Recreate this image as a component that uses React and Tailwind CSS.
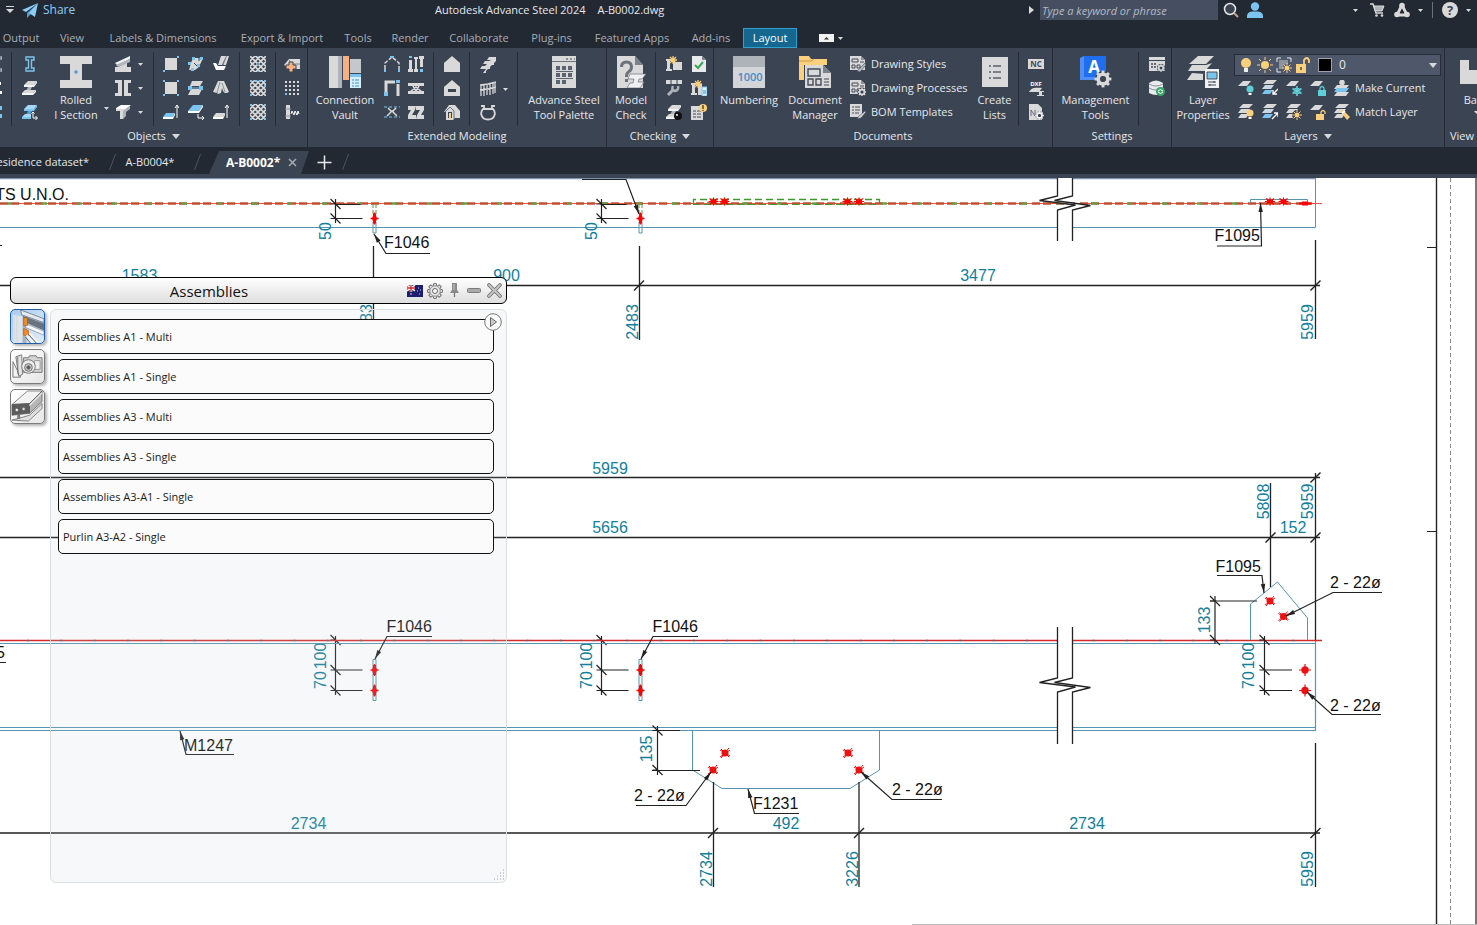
import React from "react";

const G = "#d9d9d9";
const B = "#7cc4f0";
const D = "#3b4453";
const Y = "#fbd07c";
const C = "#5fd0d8";

/* ---------- helpers ---------- */

function Ico({ s = 16, children, className = "" }) {
  return (
    <svg width={s} height={s} viewBox={`0 0 ${s} ${s}`} className={`shrink-0 ${className}`} aria-hidden="true">
      {children}
    </svg>
  );
}

function Caret({ big = false, className = "" }) {
  return big ? (
    <svg width="8" height="5" viewBox="0 0 8 5" className={`shrink-0 ${className}`} aria-hidden="true">
      <path d="M0 0h8L4 5z" fill={G} />
    </svg>
  ) : (
    <svg width="5" height="3" viewBox="0 0 5 3" className={`shrink-0 ${className}`} aria-hidden="true">
      <path d="M0 0h5L2.500 3z" fill={G} />
    </svg>
  );
}

function IconButton({ label, children }) {
  return (
    <button type="button" aria-label={label} className="flex h-6 w-6 shrink-0 items-center justify-center">
      {children}
    </button>
  );
}

function Column({ items, className = "" }) {
  return (
    <div className={`flex shrink-0 flex-col items-center ${className}`}>
      {items.map(([label, icon]) => (
        <IconButton key={label} label={label}>
          <Ico>{icon}</Ico>
        </IconButton>
      ))}
    </div>
  );
}

function BigButton({ lines, icon, className = "" }) {
  return (
    <button type="button" className={`flex shrink-0 flex-col items-center pt-1 ${className}`}>
      {icon}
      <span className="mt-1 text-[11px] leading-[15px] whitespace-nowrap text-[#e6e8eb]">
        {lines.map((l) => (
          <span key={l} className="block">{l}</span>
        ))}
      </span>
    </button>
  );
}

function Sep() {
  return <div className="w-px shrink-0 self-stretch bg-[#252c37]" />;
}

function Panel({ title, caret, className = "", children }) {
  return (
    <section className={`flex shrink-0 flex-col border-r border-[#252c37] ${className}`}>
      <div className="mt-1 flex h-[74px]">{children}</div>
      <h2 className="flex h-[21px] items-center justify-center gap-[6px] text-[11px] text-[#e6e8eb]">
        {title}
        {caret && <Caret big />}
      </h2>
    </section>
  );
}

/* ---------- small icon drawings (16 x 16) ---------- */

const beam3d = (
  <>
    <path d="M6 1h9l-3 4H2z" fill={G} />
    <path d="M2 5h10l3-4v2l-3 4H2z" fill="#f4f5f6" />
    <path d="M6 7h4l-2 4H4z" fill="#aeb3ba" />
    <path d="M3 10h11l-3 3H0z" fill={G} />
    <path d="M0 13h11l3-3v2l-3 3H0z" fill="#f4f5f6" />
  </>
);
const hatch = (dot) => (
  <>
    <path
      d="M0 5l5-5M0 10.500L10.500 0M0 16L16 0M5.500 16L16 5.500M11 16l5-5M11 0l5 5M5.500 0L16 10.500M0 0l16 16M0 5.500L10.500 16M0 11l5 5"
      stroke={G}
      strokeWidth="1.700"
    />
    {dot === 0 && <path d="M7 7h2v2H7zM7 0h2v1H7zM7 15h2v1H7z" fill="#4f9fd4" />}
    {dot === 1 && <path d="M0 14h2v2H0zM14 0h2v2h-2zM5 0h2v2H5zM9 0h2v2H9zM0 0h2v2H0zM14 5h2v2h-2z" fill={B} />}
    {dot === 2 && <path d="M0 0h2v2H0zM14 0h2v2h-2zM0 14h2v2H0zM14 14h2v2h-2z" fill={B} />}
  </>
);
const house = <path d="M8 0l8 7v9H0V7z" fill={G} />;
const slab = (c) => (
  <>
    <path d="M3 9h9l-2 4H0z" fill={c} />
    <path d="M0 13h10v2H0zM10 13l2-4v2l-2 4z" fill="#fff" />
    <path d="M14 14V2M12 4l2-3 2 3" stroke="#fff" fill="none" />
  </>
);
const sheet = (
  <>
    <path d="M0 0h11l4 4v10H0z" fill={G} />
    <path d="M11 0l4 4h-4z" fill="#8a919c" />
    <path d="M2 3h6v3H2zM2 9h3v3H2zM7 9h3v3H7zM10 6h4" stroke="#444c59" fill="none" />
  </>
);
const gear = (cx, cy, r, f = G, hole = D) => (
  <g>
    <circle cx={cx} cy={cy} r={r} fill="none" stroke={f} strokeWidth={r * 0.75} />
    {[0, 45, 90, 135, 180, 225, 270, 315].map((a) => (
      <rect key={a} x={cx - r * 0.3} y={cy - r * 1.75} width={r * 0.6} height={r * 0.7} fill={f} transform={`rotate(${a} ${cx} ${cy})`} />
    ))}
    <circle cx={cx} cy={cy} r={r * 0.55} fill={hole} />
  </g>
);
const star = (x, y) => (
  <path d={`M${x} ${y - 4}v8M${x - 4} ${y}h8M${x - 3} ${y - 3}l6 6M${x + 3} ${y - 3}l-6 6`} stroke={Y} strokeWidth="1.300" />
);
const bulb = (x, y, c) => (
  <>
    <circle cx={x} cy={y} r="3.500" fill={c} />
    <path d={`M${x - 1.5} ${y + 4}h3v2h-3z`} fill="#fff" />
  </>
);
const oneLayer = <path d="M5 1h8L9 6H0z" fill={G} />;
const layers = (blue) => (
  <>
    <path d="M5 0h10l-4 4H1z" fill={G} />
    <path d="M3 5h9l-3 4H0z" fill={blue ? "#c9d7e2" : G} />
    <path d="M3 10h8l-3 4H0z" fill={blue ? B : G} />
  </>
);
const sun = (x, y) => (
  <>
    <circle cx={x} cy={y} r="2.500" fill={Y} />
    <path d={`M${x} ${y - 5}v2M${x} ${y + 3}v2M${x - 5} ${y}h2M${x + 3} ${y}h2M${x - 3.5} ${y - 3.5}l1.500 1.500M${x + 2} ${y + 2}l1.500 1.500M${x + 3.5} ${y - 3.5}l-1.500 1.500M${x - 2} ${y + 2}l-1.500 1.500`} stroke={Y} />
  </>
);

const cutColumn = [
  ["Beam outline", <path key="a" d="M2 1h14v2h-6v10h6v2H2" stroke={G} fill="none" />],
  ["Compound beam", <path key="a" d="M2 2h13v3H2zM2 11h14v3H2z" fill="#fff" />],
  ["Folded beam", <path key="a" d="M2 2h14v4H2zM2 10h14v4H2z" fill={B} />],
];
const beamColumn = [
  ["I section", <path key="a" d="M4 1h8v3h-2.500v8H12v3H4v-3h2.500V4H4z" fill="none" stroke={B} strokeWidth="1.400" />],
  ["Curved beam", beam3d],
  ["Beam on axis", <g key="a"><path d="M6 1h9l-3 4H2z" fill="#a8d6f5" /><path d="M2 5h10l3-4v2l-3 4H2z" fill={B} /><path d="M6 7h4l-2 4H4z" fill="#4f9fd4" /><path d="M3 10h6v3H0z" fill="#a8d6f5" /><path d="M0 13h9v2H0z" fill={B} /><path d="M11 8v6h4M13.500 12l2 2-2 2M9.500 9.500L11 8l1.500 1.500" stroke="#fff" fill="none" /></g>],
];
const splitColumn = [
  ["Tapered beam", <g key="a"><path d="M0 7l15-7v3L2 9z" fill="#f0f1f2" /><path d="M1 9l14-6v3L3 11z" fill="#b4b8be" /><path d="M0 11h16v5H0z" fill={G} /><path d="M3 11l9-4v4z" fill={G} /></g>],
  ["Compound section", <path key="a" d="M0 0h7v16H0v-3h3V3H0zM9 0h7v3h-3v10h3v3H9z" fill={G} />],
  ["Tee section", <g key="a"><path d="M1 4l5-3h10l-5 4H1z" fill="#fff" /><path d="M1 5h10v2H1zM5 7h3v8H5z" fill={G} /><path d="M8 7l7-5v3l-4 3v4l-3 3z" fill="#aeb3ba" /></g>],
];
const plateA = [
  ["Rectangular plate", <g key="a"><path d="M2 2h12v12H2z" fill={G} /><path d="M14 0h2v2h-2zM0 14h2v2H0z" fill={B} /></g>],
  ["Plate at center", <g key="a"><path d="M2 2h12v12H2z" fill={G} /><path d="M0 0h2v2H0zM14 0h2v2h-2zM0 14h2v2H0zM14 14h2v2h-2z" fill={B} /></g>],
  ["Slab", slab(B)],
];
const plateB = [
  ["Polygonal plate", <g key="a"><path d="M5 2h10l-4 9-4 3H1l2-7z" fill={G} /><path d="M6 7l3 3M11 2v3" stroke={D} /><path d="M4 1h3v3H4zM12 1h3v3h-3zM0 6h3v3H0zM9 8h3v3H9zM3 12h3v3H3z" fill={B} /></g>],
  ["Folded plate", <g key="a"><path d="M4 1h11l-3 5H2zM3 9h11l-3 6H0z" fill={G} /><path d="M0 6h4v4H0zM11 6h4v4h-4z" fill={B} /><path d="M4 8h8" stroke={B} /></g>],
  ["Isolated footing", <g key="a"><path d="M5 1h10l-4 6H0z" fill={B} /><path d="M0 7h11v2H0zM11 7l4-6v2l-4 6z" fill="#fff" /><path d="M10 10v4h6M14 12l2 2-2 2" stroke="#fff" fill="none" /></g>],
];
const plateC = [
  ["Bent plate", <g key="a"><path d="M8 0h5L9 9H5zM13 0h3l-3 9h-3z" fill={G} /><path d="M10 9l3.500-9" stroke="#7b828d" /><path d="M0 7h3l2 3h8l-2 4H3z" fill="#fff" /></g>],
  ["Conical plate", <g key="a"><path d="M5 1h6l5 11c-3 2-5 1-6-1l-1-3-1 5-3 1-1-1-4-1z" fill={G} /><path d="M7 2L4 13M9 3l3 9" stroke="#8a919c" /></g>],
  ["Concrete slab", slab(G)],
];
const gratings = [["Standard grating", hatch(0)], ["Variable grating", hatch(1)], ["Polygon grating", hatch(2)]];
const bolts = [
  ["Add material", <g key="a"><path d="M0 9l5-6h11v10H6z" fill={G} /><path d="M16 8H8l-3-4" stroke="#7b828d" fill="none" /><path d="M5 6h4v3h3v4H9v3H5v-3H2V9h3z" fill="#f5b183" stroke={D} /></g>],
  ["Bolts", <g key="a">{[1, 5, 9, 13].map((y) => [1, 5, 9, 13].map((x) => <rect key={`${x}-${y}`} x={x} y={y} width="2" height="2" fill={x === 1 && y === 13 ? B : G} />))}</g>],
  ["Shear studs", <g key="a"><path d="M2 1h4v14H2z" fill={G} /><path d="M1 5h6M1 12h6" stroke="#8a919c" /><path d="M7 10l1-3 2 4 1-4 2 4 1-4 1 3" stroke="#fff" fill="none" /></g>],
];
const extA = [
  ["Portal frame", <g key="a"><path d="M1 13V7l7-6 7 6v6" stroke={G} fill="none" strokeWidth="1.500" strokeDasharray="4 1.500" /><path d="M0 13h2v3H0zM14 13h2v3h-2zM6 0h4v2H6z" fill={B} /></g>],
  ["Frame", <g key="a"><path d="M2 12V2h9M14 4v12" stroke={G} fill="none" strokeWidth="3" /><path d="M0 12h4v4H0zM12 0h4v3h-4z" fill={B} /></g>],
  ["Bracing", <g key="a"><path d="M0 3h16M0 13h16" stroke={B} strokeDasharray="3 2" /><path d="M3 12l5-5 5 5M4 4l3 3M12 4L9 7" stroke={G} fill="none" strokeWidth="1.500" /></g>],
];
const extB = [
  ["Columns", <g key="a"><path d="M1 4h3v9h1v3H0v-3h1zM6 1h4v2H9v10h1v3H6v-3h1V3H6zM11 0h5v3h-1v8h-3V3h-1z" fill={G} /><path d="M1 0h3v2H1zM12 13h3v3h-3z" fill={B} /></g>],
  ["Truss", <g key="a"><path d="M0 3h16v3H0zM0 11h16v3H0z" fill={G} /><path d="M2 12l6-5 6 5M5 6l3 5 3-5" stroke={G} strokeWidth="1.500" fill="none" /></g>],
  ["Purlins", <path key="a" d="M0 2h8l-1 4-3 5h4v4H0v-4l3-5H0zM8 2h8v4l-3 5h3v4H8l1-4 3-5H8z" fill={G} />],
];
const extC = [
  ["Gable wall", house],
  ["Mono pitch", <g key="a">{house}<path d="M4 9h8v3H4z" fill={D} /></g>],
  ["Structural house", <g key="a"><path d="M5 1h6l5 6v7h-5l-2 2H2V8H0z" fill={G} /><path d="M1 8l5-5 4 4v8" stroke="#6b727d" fill="none" /><path d="M4 8h4v6H4z" fill={D} /><path d="M5 9h2v6H5z" fill={Y} /></g>],
];
const extD = [
  ["Straight stair", <path key="a" d="M9 0h7v4l-2 2v2h-2l-2 2v2H8l-2 2v2H3l3-4H0l2-3h3l2-2H3l2-3h4l2-1H7z" fill={G} />],
  ["Railing", <g key="a"><path d="M0 4l8-1 8-2M0 9l8-1 8-2M1 15V4M4 15V4M7 14V3M10 14V3M13 13V2M15 12V1" stroke={G} strokeWidth="1.300" fill="none" /></g>],
  ["Cage ladder", <path key="a" d="M1 1h3v3M15 1h-3v3M4 4h8M4 3C-1 7 1 14.500 8 14.500S17 7 12 3" stroke={G} strokeWidth="1.800" fill="none" />],
];
const chkA = [
  ["Display clash", <g key="a"><path d="M0 3h5v2H4v8h2v2H0v-2h1V5H0zM7 6h9v8H7z" fill={G} />{star(7, 4)}</g>],
  ["Joint repair", <g key="a"><path d="M0 0h16v4H0z" fill={G} /><path d="M5 0v4M11 0v4" stroke={D} /><path d="M2 15l5-5" stroke="#aeb3ba" strokeWidth="3" /><path d="M7 6q-2 4 2 5 4-1 3-5" stroke="#aeb3ba" strokeWidth="2.500" fill="none" /></g>],
  ["Steel audit", <g key="a">{beam3d}<circle cx="12" cy="12" r="4" fill="#111" /><circle cx="11" cy="11" r="1" fill="#fff" /></g>],
];
const chkB = [
  ["Approve sheet", <g key="a"><path d="M1 0h10l4 4v12H1z" fill="#e8eaec" /><path d="M11 0v4h4" fill="#7b828d" /><path d="M4 9l3 3 5-6" stroke="#3aa757" strokeWidth="2" fill="none" /></g>],
  ["Compare model", <g key="a"><path d="M0 3h5v2H4v8h2v2H0v-2h1V5H0zM7 4h4v11H7z" fill={G} /><path d="M11 7h5v9h-5z" fill="#dff1fb" stroke={B} /><path d="M12 11h3M12 13h3" stroke="#3b8fc4" />{star(7, 4)}</g>],
  ["Warnings list", <g key="a"><path d="M0 2h12v14H0z" fill={G} /><path d="M2 7h3M6 7h4M2 10h3M6 10h4M2 13h3M6 13h4" stroke="#444c59" /><circle cx="12" cy="4" r="4" fill={Y} /><path d="M12 1v4M12 6v1" stroke="#333" strokeWidth="1.300" /></g>],
];
const ncCol = [
  ["NC", <g key="a"><path d="M0 3h16v10H0z" fill={G} /><text x="8" y="11" fontSize="8" fontWeight="700" textAnchor="middle" fill="#444c59">NC</text></g>],
  ["DXF", <g key="a"><text x="8" y="6" fontSize="6" fontWeight="700" textAnchor="middle" fill="#fff">DXF</text><path d="M1 12c2-4 5-5 13-4l-3 4zM9 11h7v1h-2v3h2v1H9v-1h2v-3H9z" fill={G} /></g>],
  ["NC settings", <g key="a"><path d="M1 0h9l4 4v12H1z" fill={G} /><path d="M3 12V6l4 6V6" stroke="#666d78" fill="none" /><circle cx="11.500" cy="11.500" r="4" fill={D} />{gear(11.5, 11.5, 2.5, "#eee")}</g>],
];

const drawingRows = [
  ["Drawing Styles", <g key="a">{sheet}<path d="M7 15l8-8 1 2-6 7z" fill="#aeb3ba" stroke={D} strokeWidth="0.500" /></g>],
  ["Drawing Processes", <g key="a">{sheet}<circle cx="12" cy="12" r="4.500" fill={D} />{gear(12, 12, 2.4)}</g>],
  ["BOM Templates", <g key="a"><path d="M0 0h12v13H0z" fill={G} /><path d="M2 3h2M5 3h5M2 6h2M5 6h5M2 9h2M5 9h4" stroke="#444c59" /><path d="M7 15l2-3 6-5 1 1-5 6z" fill={G} stroke={D} strokeWidth="0.600" /></g>],
];

const layerTop = [
  ["Layer off", <g key="a">{oneLayer}{bulb(12, 9, C)}</g>],
  ["Isolate layer", <g key="a">{layers(true)}<path d="M16 9l-5 5M11 10v4h4" stroke="#fff" strokeWidth="1.300" fill="none" /></g>],
  ["Freeze layer", <g key="a">{oneLayer}<path d="M11 6v10M6.500 8.500l9 5M15.500 8.500l-9 5" stroke={C} strokeWidth="1.600" /><circle cx="11" cy="11" r="3" fill="none" stroke={C} /></g>],
  ["Lock layer", <g key="a">{oneLayer}<path d="M8 10h8v6H8z" fill={C} /><path d="M10 10V8q2-3 4 0v2" stroke={C} strokeWidth="1.300" fill="none" /></g>],
];
const layerBottom = [
  ["All layers on", <g key="a">{layers(false)}{bulb(12, 9, Y)}</g>],
  ["Unisolate layer", <g key="a">{layers(true)}<path d="M10 15l6-6M12 9h4v4" stroke="#fff" strokeWidth="1.300" fill="none" /></g>],
  ["Thaw layers", <g key="a">{layers(false)}<circle cx="11" cy="11" r="5" fill={D} />{sun(11, 11)}</g>],
  ["Unlock layer", <g key="a">{oneLayer}<path d="M6 10h8v6H6z" fill={Y} /><path d="M11 10V8q2-3 4 0v2" stroke={Y} strokeWidth="1.300" fill="none" /></g>],
];

/* ---------- title bar and tabs ---------- */

function TitleBar() {
  return (
    <header className="flex h-5 items-center text-[11px] text-[#e6e8eb]">
      <div className="flex w-[435px] shrink-0 items-center">
        <button type="button" aria-label="Customize quick access" className="ml-[6px] flex w-4 flex-col items-start">
          <svg width="8" height="8" viewBox="0 0 8 8"><path d="M0 0h8v1H0zM0 3h8L4 7z" fill={G} /></svg>
        </button>
        <button type="button" className="flex items-center gap-[5px] text-[12px] text-[#8fcdf5]">
          <svg width="16" height="15" viewBox="0 0 16 15" aria-hidden="true">
            <path d="M16 0L0 7l4 2z" fill="#8fcdf5" /><path d="M16 0L5 10v5l3-3z" fill="#4f9fd4" /><path d="M16 0L7 10l6 4z" fill="#8fcdf5" />
          </svg>
          Share
        </button>
      </div>
      <h1 className="flex gap-3 whitespace-nowrap">
        <span>Autodesk Advance Steel 2024</span>
        <span>A-B0002.dwg</span>
      </h1>
      <div className="ml-auto flex items-center">
        <svg width="5" height="8" viewBox="0 0 5 8" className="mr-[6px]" aria-hidden="true"><path d="M0 0l5 4-5 4z" fill={G} /></svg>
        <input
          aria-label="Search"
          placeholder="Type a keyword or phrase"
          className="h-5 w-[178px] bg-[#464f61] px-[2px] text-[11px] italic placeholder:text-[#b4bac4] focus:outline-none"
        />
        <button type="button" aria-label="Run search" className="ml-[5px]">
          <Ico><circle cx="7" cy="7" r="5.500" fill="#3b4453" stroke="#e6e8eb" strokeWidth="1.500" /><path d="M11 11l4 4" stroke="#c9a38a" strokeWidth="2" /></Ico>
        </button>
        <button type="button" aria-label="Account" className="ml-2">
          <Ico><circle cx="8" cy="4.500" r="4.200" fill={B} /><path d="M0 16v-2q0-4 5-4.500h6q5 .5 5 4.500v2z" fill={B} /></Ico>
        </button>
        <Caret className="mr-3 ml-[90px]" />
        <button type="button" aria-label="Store">
          <Ico><path d="M0 2h3l3 9h7" stroke={G} strokeWidth="1.500" fill="none" /><path d="M4 4h10l-2 5H5z" fill="#aeb3ba" stroke={G} /><circle cx="6.500" cy="13.500" r="1.300" fill={G} /><circle cx="12" cy="13.500" r="1.300" fill={G} /></Ico>
        </button>
        <button type="button" aria-label="Autodesk apps" className="ml-2 flex items-center gap-2">
          <Ico><path d="M8 3L3 13h10z" stroke={G} strokeWidth="2.800" strokeLinejoin="round" fill="none" /><circle cx="8" cy="3.500" r="2.800" fill={G} /><circle cx="3" cy="12.500" r="2.800" fill={G} /><circle cx="13" cy="12.500" r="2.800" fill={G} /></Ico>
          <Caret />
        </button>
        <div className="mx-[9px] h-4 w-px bg-[#6a717d]" />
        <button type="button" aria-label="Help" className="flex items-center gap-2 pr-[6px]">
          <span className="flex h-4 w-4 items-center justify-center rounded-full bg-[#d9d9d9] text-[13px] leading-4 font-bold text-[#3b4453]">?</span>
          <Caret />
        </button>
      </div>
    </header>
  );
}

const tabs = [
  ["Output", "w-[52px] -ml-[5px]"],
  ["View", "w-[50px]"],
  ["Labels & Dimensions", "w-[132px]"],
  ["Export & Import", "w-[106px]"],
  ["Tools", "w-[46px]"],
  ["Render", "w-[58px]"],
  ["Collaborate", "w-[80px]"],
  ["Plug-ins", "w-[65px]"],
  ["Featured Apps", "w-[96px]"],
  ["Add-ins", "w-[62px]"],
];

function RibbonTabs() {
  return (
    <nav className="mt-2 flex h-5 items-stretch text-[11px] whitespace-nowrap text-[#a9aeb6]">
      {tabs.map(([t, w]) => (
        <button key={t} type="button" className={`flex shrink-0 items-center justify-center ${w}`}>{t}</button>
      ))}
      <button type="button" className="ml-px w-[54px] border border-[#2f9fd0] bg-[#15678f] text-white">Layout</button>
      <button type="button" aria-label="Minimize ribbon" className="ml-[22px] flex items-center gap-1">
        <svg width="15" height="8" viewBox="0 0 15 8"><path d="M0 0h15v8H0z" fill="#f2f2f2" /><path d="M5 5.500h5L7.500 3z" fill="#333" /></svg>
        <Caret />
      </button>
    </nav>
  );
}

/* ---------- ribbon ---------- */

function Ribbon() {
  return (
    <div className="flex h-[99px] overflow-hidden bg-[#3b4453]">
      <Panel title="Objects" caret className="w-[308px]">
        <div className="flex w-[11px] shrink-0 justify-end overflow-hidden pr-[5px]"><Column items={cutColumn} /></div>
        <Sep />
        <Column items={beamColumn} className="w-9" />
        <BigButton
          className="w-14"
          lines={["Rolled", "I Section"]}
          icon={<Ico s={32}><path d="M0 0h32v8H22v16h10v8H0v-8h10V8H0z" fill={G} /><circle cx="16" cy="16" r="1.800" fill="#4f9fd4" /></Ico>}
        />
        <div className="flex w-1 items-end pb-[16px]"><Caret /></div>
        <div className="flex w-[45px] shrink-0 flex-col">
          {splitColumn.map(([l, i]) => (
            <button key={l} type="button" aria-label={l} className="flex h-6 items-center gap-[7px] pl-[7px]"><Ico>{i}</Ico><Caret /></button>
          ))}
        </div>
        <Sep />
        <div className="flex w-[85px] shrink-0 items-start justify-center gap-px pr-[2px]">
          <Column items={plateA} /><Column items={plateB} /><Column items={plateC} />
        </div>
        <Sep />
        <Column items={gratings} className="w-[35px]" />
        <Sep />
        <Column items={bolts} className="w-[31px]" />
      </Panel>

      <Panel title="Extended Modeling" className="w-[299px]">
        <BigButton
          className="w-[74px]"
          lines={["Connection", "Vault"]}
          icon={
            <Ico s={32}>
              <path d="M0 0h13v32H0z" fill={G} /><path d="M9 0h4v32H9z" fill="#aeb3ba" /><path d="M14 0h6v24h-6z" fill="#f5b183" /><path d="M21 3h11v14H21z" fill="#c4c8cd" />
              <path d="M21 18h11v14H21z" fill="#d5effd" /><path d="M21 18h11v3H21z" fill={B} /><path d="M23 24h2M26 24h4M23 27h2M26 27h4M23 30h2M26 30h4" stroke="#3b8fc4" />
            </Ico>
          }
        />
        <Column items={extA} className="-ml-[2px]" /><Column items={extB} className="mr-[5px]" />
        <Sep />
        <Column items={extC} className="w-[35px]" />
        <Sep />
        <div className="flex w-[47px] shrink-0 items-center pl-[6px]"><Column items={extD} /><Caret className="ml-[3px]" /></div>
        <Sep />
        <BigButton
          className="w-[88px] pl-1"
          lines={["Advance Steel", "Tool Palette"]}
          icon={
            <Ico s={32}>
              <path d="M4 0h24v32H4z" fill={G} /><path d="M4 5.500h24" stroke="#6b727d" /><path d="M18 3h2M22 3h2M26 3h1" stroke="#444c59" />
              {[10, 17, 24].map((y) => [8, 14, 20].map((x) => (y > 20 && x > 14 ? null : <rect key={`${x}${y}`} x={x} y={y} width="4" height="4" fill="#5a6270" />)))}
              <path d="M8 15.500h17M8 22.500h17" stroke="#5a6270" />
            </Ico>
          }
        />
      </Panel>

      <Panel title="Checking" caret className="w-[107px]">
        <BigButton
          className="w-12"
          lines={["Model", "Check"]}
          icon={
            <Ico s={32}>
              <path d="M2 0h18l8 9v23H2z" fill={G} /><path d="M20 0l8 9h-8z" fill="#7b828d" />
              <path d="M6.500 11q0-5 5-5t5 5q0 3-3 5-2 1-2 5" stroke="#6b727d" strokeWidth="3" fill="none" /><path d="M10 23h3v3h-3z" fill="#6b727d" />
              <path d="M15 18h16l-4 5h-3l-1 3h6l-4 6H12l3-5h3l1-4h-6z" fill="#eef0f1" stroke="#6b727d" strokeWidth="0.700" />
            </Ico>
          }
        />
        <Sep />
        <Column items={chkA} className="ml-[6px]" /><Column items={chkB} className="ml-px" />
      </Panel>

      <Panel title="Documents" className="w-[339px]">
        <BigButton
          className="w-[70px]"
          lines={["Numbering"]}
          icon={
            <Ico s={32}>
              <path d="M0 0h32v32H0z" fill="#d3d5d8" /><path d="M0 0h32v11H0z" fill="#aeb3ba" />
              <text x="17" y="25" fontSize="11" fontWeight="600" textAnchor="middle" fill="#3f8fc8">1000</text>
            </Ico>
          }
        />
        <BigButton
          className="w-[62px]"
          lines={["Document", "Manager"]}
          icon={
            <Ico s={32}>
              <path d="M0 0h10l2 3h16v6H5v15H0z" fill={Y} /><path d="M0 5h12l3-2" stroke="#c79a45" fill="none" />
              <path d="M6 9h18l8 8v15H6z" fill={G} /><path d="M24 9l8 8h-8z" fill="#7b828d" />
              <path d="M9 13h12v7H9zM9 23h5v6H9zM17 23h5v6h-5z" stroke="#444c59" strokeWidth="1.400" fill="none" /><path d="M25 23h5M25 26h5M25 29h5" stroke="#444c59" />
            </Ico>
          }
        />
        <div className="flex w-[132px] shrink-0 flex-col pl-1">
          {drawingRows.map(([l, i]) => (
            <button key={l} type="button" className="flex h-6 items-center gap-[5px] text-[11px] whitespace-nowrap text-[#e6e8eb]"><Ico>{i}</Ico>{l}</button>
          ))}
        </div>
        <BigButton
          className="w-[33px]"
          lines={["Create", "Lists"]}
          icon={
            <Ico s={32}>
              <path d="M3 1h26v30H3z" fill={G} /><path d="M10 10h2M10 16h2M10 22h2M14 10h8M14 16h8M14 22h8" stroke="#5a6270" strokeWidth="1.300" />
            </Ico>
          }
        />
        <div className="flex-1" />
        <Sep />
        <Column items={ncCol} className="w-[33px]" />
      </Panel>

      <Panel title="Settings" className="w-[119px]">
        <BigButton
          className="w-[85px]"
          lines={["Management", "Tools"]}
          icon={
            <Ico s={32}>
              <path d="M0 2l4-2h22v22l-4 2H0z" fill="#4f8ff5" /><path d="M4 0h22v21H4z" fill="#1f6ef0" />
              <text x="14" y="17" fontSize="17" fontWeight="700" textAnchor="middle" fill="#fff">A</text>
              <circle cx="23" cy="23" r="8" fill={D} />{gear(23, 23, 4.8)}
            </Ico>
          }
        />
        <Sep />
        <Column
          className="w-9"
          items={[
            ["Management settings", <g key="a"><path d="M0 1h16v3H0zM0 5h16v10H0z" fill={G} /><path d="M2 8h5M2 11h5" stroke="#444c59" strokeWidth="1.300" strokeDasharray="2 1" /><circle cx="12" cy="12" r="4" fill={D} />{gear(12, 12, 2.2)}</g>],
            ["Refresh database", <g key="a"><path d="M0 3q7-5 14 0v10q-7 4-14 0z" fill="#e8eaec" /><path d="M0 4q7 4 14 0M0 8q7 4 14 0" stroke="#8a919c" fill="none" /><circle cx="11.500" cy="11.500" r="4.500" fill="#3aa76b" /><path d="M9 11q2-3 5 0M14 12q-2 3-5 0" stroke="#fff" fill="none" /></g>],
          ]}
        />
      </Panel>

      <Panel title="Layers" caret className="w-[273px]">
        <BigButton
          className="w-[62px]"
          lines={["Layer", "Properties"]}
          icon={
            <Ico s={32}>
              <path d="M11 0h16l-8 8H2z" fill={G} /><path d="M5 9l-4 6h17l7-8-6 2z" fill={G} /><path d="M5 17l-5 7h16v-6h2z" fill={G} />
              <path d="M18 13h14v19H18z" fill="#f0f1f2" /><path d="M20 16h10v7H20z" fill={B} stroke="#333" strokeWidth="0.800" /><path d="M21 26h8M21 29h8M27 25v2M23 28v2" stroke="#444c59" />
            </Ico>
          }
        />
        <div className="mt-[2px] flex min-w-0 flex-1 flex-col pr-[3px]">
          <label className="flex h-[22px] items-center gap-[3px] border border-[#262d38] bg-[#4f586b] px-[3px] text-[12px] text-[#e6e8eb]">
            <Ico><circle cx="8" cy="6" r="5" fill={Y} /><path d="M6 11h4v4H6z" fill="#eee" /></Ico>
            <Ico><circle cx="8" cy="8" r="4" fill={Y} /><path d="M8 0v3M8 13v3M0 8h3M13 8h3M2 2l2 2M12 12l2 2M14 2l-2 2M4 12l-2 2" stroke={Y} /></Ico>
            <Ico><path d="M1 5V1h4M11 1h4v4M1 11v4h4" stroke="#e6e8eb" fill="none" /><path d="M3 3h9v9H3z" fill="#8d939d" /><circle cx="11" cy="11" r="4" fill="#4f586b" />{sun(11, 11)}</Ico>
            <Ico><path d="M1 7h10v9H1z" fill={Y} /><path d="M9 7V3q3-4 5 0v3" stroke={Y} strokeWidth="1.800" fill="none" /><path d="M6 10v3" stroke="#444c59" strokeWidth="1.500" /></Ico>
            <span className="mx-1 h-[14px] w-[14px] shrink-0 border border-[#9aa1ad] bg-black" />
            <select aria-label="Current layer" className="min-w-0 flex-1 appearance-none bg-transparent focus:outline-none"><option>0</option></select>
            <Caret big />
          </label>
          {[[layerTop, "Make Current", <g key="m"><path d="M3 5h12l-3 4H0z" fill={G} /><path d="M3 8h12l-3 4H0z" fill={B} /><path d="M3 12h12l-3 4H0z" fill={G} /><circle cx="8" cy="2.500" r="2.800" fill={G} /></g>],
            [layerBottom, "Match Layer", <g key="n">{layers(false)}<path d="M6 7l3-1 7 7-3 3z" fill={Y} /><path d="M8 9l3-2" stroke="#fff" strokeWidth="2" /></g>]].map(([row, label, icon]) => (
            <div key={label} className="flex h-6 items-center">
              {row.map(([l, i]) => <IconButton key={l} label={l}><Ico>{i}</Ico></IconButton>)}
              <button type="button" className="flex items-center gap-[5px] pl-1 text-[11px] whitespace-nowrap text-[#e6e8eb]"><Ico>{icon}</Ico>{label}</button>
            </div>
          ))}
        </div>
      </Panel>

      <section className="flex min-w-0 flex-1 flex-col overflow-hidden pl-[5px] text-[11px] text-[#e6e8eb]">
        <button type="button" className="mt-1 flex h-[74px] w-[52px] shrink-0 flex-col items-center pt-1">
          <span className="self-start pl-[10px]"><Ico s={32}><path d="M0 4h9v10h12v14H0z" fill={G} /></Ico></span>
          <span className="mt-1 leading-[15px]">Base</span>
          <Caret className="mt-1" />
        </button>
        <h2 className="flex h-[21px] items-center whitespace-nowrap">View</h2>
      </section>
    </div>
  );
}

/* ---------- file tabs ---------- */

function Slash({ className = "" }) {
  return (
    <svg width="7" height="16" viewBox="0 0 7 16" className={`shrink-0 ${className}`} aria-hidden="true">
      <path d="M0.500 16L6.500 0" stroke="#4b5463" />
    </svg>
  );
}

function FileTabs() {
  return (
    <div className="border-b-4 border-[#3b4453]">
      <div className="flex h-[27px] items-end overflow-hidden text-[11px] whitespace-nowrap text-[#e6e8eb]">
        <button type="button" className="flex h-6 w-[89px] shrink-0 items-center justify-end">esidence dataset*</button>
        <Slash className="mb-1 ml-5" />
        <button type="button" className="flex h-6 w-[68px] shrink-0 items-center justify-center">A-B0004*</button>
        <Slash className="mb-1 ml-[10px]" />
        <div className="ml-2 flex h-[23px] w-[100px] shrink-0 items-center bg-[#3b4453] pl-[17px] [clip-path:polygon(10%_0,100%_0,92%_100%,0_100%)]">
          <button type="button" className="text-[12px] font-bold text-white">A-B0002*</button>
          <button type="button" aria-label="Close A-B0002" className="ml-2">
            <svg width="9" height="9" viewBox="0 0 9 9"><path d="M1 1l7 7M8 1L1 8" stroke="#a9aeb6" strokeWidth="1.500" /></svg>
          </button>
        </div>
        <button type="button" aria-label="New drawing" className="mb-1 ml-2">
          <svg width="15" height="15" viewBox="0 0 15 15"><path d="M7.500 0.500v14M0.500 7.500h14" stroke="#e6e8eb" strokeWidth="1.500" /></svg>
        </button>
        <Slash className="mb-1 ml-[10px]" />
      </div>
    </div>
  );
}

/* ---------- drawing sheet ---------- */

const INK = "#222";
const TEAL = "#5596ad";
const NUM = "#12809c";

const L = ({ d, c = INK, w = 1, ...p }) => <path d={d} stroke={c} strokeWidth={w} fill="none" {...p} />;
const T = ({ x, y, children, c = "#111", a = "start" }) => (
  <text x={x} y={y} fill={c} textAnchor={a}>{children}</text>
);
const Dim = ({ x, y, children }) => <T x={x} y={y} c={NUM} a="middle">{children}</T>;
const VDim = ({ x, y, children }) => (
  <text x="0" y="0" fill={NUM} textAnchor="middle" transform={`translate(${x} ${y}) rotate(-90)`}>{children}</text>
);
const Tick = ({ x, y }) => <L d={`M${x - 5} ${y + 5}l10-10`} w={1.4} />;
const BackTick = ({ x, y }) => <L d={`M${x - 5} ${y - 5}l10 10M${x - 5} ${y}h5`} w={1.2} />;
const Bolt = ({ x, y, kind }) => {
  if (kind === "thin")
    return <g><path d={`M${x - 4} ${y}h8M${x} ${y - 6}v12`} stroke="red" strokeWidth="1.300" /><path d={`M${x - 1.5} ${y - 5}h3v2l1 3-1 3v2h-3v-2l-1-3 1-3z`} fill="red" /></g>;
  if (kind === "flat")
    return <g><path d={`M${x - 5} ${y}h10M${x} ${y - 4}v8M${x - 4} ${y - 3}l8 6M${x + 4} ${y - 3}l-8 6`} stroke="red" strokeWidth="1.200" /><path d={`M${x - 3} ${y - 2}h6v4h-6z`} fill="red" /></g>;
  if (kind === "x")
    return (
      <g>
        <path d={`M${x - 5} ${y - 3}l10 6M${x + 4} ${y - 5}l-8 10M${x - 4} ${y - 4}l8 8M${x + 5} ${y - 3}l-10 7`} stroke="#e11" strokeWidth="1" />
        <circle cx={x} cy={y} r="3.500" fill="#e11" />
      </g>
    );
  return (
    <g>
      <path d={`M${x - 6} ${y}h12M${x} ${y - 6}v12`} stroke="#e11" strokeWidth="1.200" />
      <circle cx={x} cy={y} r="3.700" fill="#e11" />
    </g>
  );
};
const Leader = ({ tip, to, end }) => {
  const ang = (Math.atan2(to[1] - tip[1], to[0] - tip[0]) * 180) / Math.PI;
  return (
    <g>
      <L d={`M${tip[0]} ${tip[1]}L${to[0]} ${to[1]}H${end}`} w={1.2} />
      <path d="M0 0l9-2.200v4.400z" fill={INK} transform={`translate(${tip[0]} ${tip[1]}) rotate(${ang})`} />
    </g>
  );
};
const Break = ({ top, mid, bottom }) => (
  <g>
    <path d={`M1057.500 ${top}V${mid - 7}l-18 4.500 36 4.500-18 5V${bottom}H1072.500V${mid + 7}l18-4.500-36-5 18-4.500V${top}z`} fill="#fff" />
    <L d={`M1057.500 ${top}V${mid - 7}l-18 4.500 36 4.500-18 5V${bottom}`} w={1.3} />
    <L d={`M1072.500 ${top}V${mid - 7}l-18 4.500 36 5-18 4.500V${bottom}`} w={1.3} />
  </g>
);

function Sheet() {
  return (
    <svg width="100%" height="100%" className="block" role="img" aria-label="Assembly drawing" fontFamily="Liberation Sans, Arial, sans-serif" fontSize="16">
      <g transform="translate(0 -178)">
        {/* sheet borders */}
        <L d="M1436.500 178V925" w={1.4} />
        <L d="M1427 247.500h9M1427 531.500h9" />
        <L d="M1450.500 178V925" c="#888" strokeDasharray="4 3" />
        <L d="M1476 178V925" c="#777" w={2} />
        <L d="M912 924.500H1477" c="#bbb" />

        {/* top view */}
        <L d="M0 178.500H1315" c="#7d93ad" w={1.5} />
        <L d="M0 227.500H1315.500V178" c={TEAL} />
        <L d="M0 203.500H1322" c="#f0513f" w={1.2} />
        <L d="M0 203.500H1312" c="#c04f33" w={2.4} strokeDasharray="8 3 8 5" />
        <L d="M7 203.500H1312" c="#6aa048" w={2.4} strokeDasharray="5 30" />
        <L d="M693.500 204V199.500H879.500V204" c="#3c9a2c" strokeDasharray="7 4" w={1.3} />
        <L d="M693 204.500H880" c="#3c9a2c" strokeDasharray="7 4" />
        <L d="M1250.500 203V199.500H1307.500V203" c={TEAL} />
        <Bolt x={713.5} y={201.5} kind="flat" /><Bolt x={724.5} y={201.5} kind="flat" />
        <Bolt x={847.5} y={201.5} kind="flat" /><Bolt x={859} y={201.5} kind="flat" />
        <Bolt x={1270} y={201.5} kind="flat" /><Bolt x={1283.5} y={201.5} kind="flat" />
        <L d="M1299 203.500H1311" c="red" w={2} /><L d="M1302 203.500H1308" c="red" w={4} />
        {[374.5, 640.5].map((x) => (
          <g key={x}>
            <L d={`M${x - 1.5} 204v12M${x + 1.5} 204v12`} c="#5c9a3c" strokeDasharray="4 2" />
            <L d={`M${x - 1.5} 222v11h3v-11`} c={TEAL} />
            <Bolt x={x} y={218.5} kind="thin" />
            <L d={`M${x - 1.5} 659.500h3v41h-3z`} c={TEAL} />
            <Bolt x={x} y={670} kind="thin" /><Bolt x={x} y={690.500} kind="thin" />
          </g>
        ))}
        {[335.5, 601.5].map((x) => (
          <g key={x}>
            <L d={`M${x} 199V223M${x} 204.500h25M${x} 218.500h27`} w={1.2} />
            <BackTick x={x} y={204} /><BackTick x={x} y={218.5} />
            <VDim x={x - 5} y={231}>50</VDim>
            <L d={`M${x} 636V695M${x} 670h27M${x} 690.500h27`} w={1.2} />
            <BackTick x={x} y={640} /><BackTick x={x} y={670} /><BackTick x={x} y={690.5} />
            <VDim x={x - 10} y={656}>100</VDim><VDim x={x - 10} y={680}>70</VDim>
          </g>
        ))}
        <T x={69} y={200} a="end">TS U.N.O.</T>
        <L d="M0 245.500h2" />
        <Leader tip={[374, 234]} to={[386, 253.5]} end={430} /><T x={384} y={248}>F1046</T>
        <Leader tip={[639, 214]} to={[626, 179.5]} end={582} />
        <Leader tip={[1260.5, 203]} to={[1261.5, 246]} end={1217} /><T x={1214.5} y={241}>F1095</T>
        <Break top={178} mid={203} bottom={241} />

        {/* top dimension chain */}
        <L d="M0 285.500H1320M373.500 246V340M639.500 246V340M1315.500 240V339" w={1.3} />
        <Tick x={639} y={285.5} /><Tick x={1315.5} y={285.5} />
        <Dim x={139.5} y={281}>1583</Dim><Dim x={506.5} y={281}>900</Dim><Dim x={978} y={281}>3477</Dim>
        <VDim x={371.500} y={322}>1483</VDim><VDim x={637.500} y={322}>2483</VDim><VDim x={1313} y={322}>5959</VDim>

        {/* overall dimensions */}
        <L d="M0 477.500H1320M0 537.500H1320M1315.500 473V640M1270.500 483V587" w={1.3} />
        <Tick x={1315.5} y={477.5} /><Tick x={1315.5} y={537.5} /><Tick x={1270.5} y={537.5} />
        <Dim x={610} y={474}>5959</Dim><Dim x={610} y={533}>5656</Dim><Dim x={1293} y={533}>152</Dim>
        <VDim x={1268.500} y={501.500}>5808</VDim><VDim x={1313} y={501.500}>5959</VDim>

        {/* front view */}
        <L d="M0 643.500H1315M0 727.500H1315M0 730.500H1315.500V640" c="#5596b4" w={1.2} />
        <L d="M0 640.500H1322" c="#d42a2a" w={1.6} />
        <L d="M27 640.500H1310" c="#3d6f8c" w={1.6} strokeDasharray="2 31.300" />
        <L d="M1250.500 640V604l27-22 30 36v22" c={TEAL} />
        <Bolt x={1270} y={601} kind="x" /><Bolt x={1283.5} y={616.5} kind="x" />
        <Bolt x={1305} y={670} /><Bolt x={1305} y={690.5} />
        <Leader tip={[1264, 593]} to={[1262, 575.5]} end={1217} /><T x={1215.500} y={572}>F1095</T>
        <Leader tip={[1286, 616]} to={[1333, 592.5]} end={1382} /><T x={1330} y={588}>2 - 22ø</T>
        <Leader tip={[1307, 692]} to={[1332, 714.5]} end={1381} /><T x={1330} y={711}>2 - 22ø</T>
        <L d="M1215 596V644M1210 601h47M1264.500 636V695M1264 670h28M1264 690.500h28" w={1.2} />
        <BackTick x={1215} y={601} /><BackTick x={1215} y={640} />
        <BackTick x={1264.5} y={640} /><BackTick x={1264.5} y={670} /><BackTick x={1264.5} y={690.5} />
        <VDim x={1210} y={620}>133</VDim><VDim x={1254} y={656}>100</VDim><VDim x={1254} y={680}>70</VDim>
        <Leader tip={[375, 659]} to={[387, 636.5]} end={432} /><T x={386.500} y={632}>F1046</T>
        <Leader tip={[641, 659]} to={[653, 636.5]} end={698} /><T x={652.500} y={632}>F1046</T>
        <T x={5} y={658} a="end">5</T><L d="M0 662.500h6" />
        <Leader tip={[180, 731]} to={[186, 754.5]} end={234} /><T x={184} y={751}>M1247</T>
        <Break top={627} mid={685} bottom={744} />

        {/* lower plate */}
        <L d="M692.500 730V770L722 788.500H850L879.500 770V730" c={TEAL} />
        <Bolt x={725} y={753} kind="x" /><Bolt x={713} y={770} kind="x" />
        <Bolt x={848} y={753} kind="x" /><Bolt x={859} y={770} kind="x" />
        <L d="M657.500 726V775M657 730.500h23M652 770.500h48" w={1.2} />
        <BackTick x={657.5} y={730.5} /><BackTick x={657.5} y={770} /><VDim x={651.500} y={749}>135</VDim>
        <Leader tip={[711, 772]} to={[686, 805.5]} end={636} /><T x={634} y={801}>2 - 22ø</T>
        <Leader tip={[861, 772]} to={[892, 799.5]} end={942} /><T x={892} y={795}>2 - 22ø</T>
        <Leader tip={[748, 789]} to={[754.500, 813.5]} end={799} /><T x={753} y={809}>F1231</T>
        <L d="M0 833H1320M713.500 782V887M859 782V887M1315.500 743V887" w={1.3} />
        <Tick x={713} y={833} /><Tick x={859} y={833} /><Tick x={1315.5} y={833} />
        <Dim x={308.5} y={829}>2734</Dim><Dim x={786} y={829}>492</Dim><Dim x={1087} y={829}>2734</Dim>
        <VDim x={711.500} y={869}>2734</VDim><VDim x={857.500} y={869}>3226</VDim><VDim x={1313} y={869}>5959</VDim>
      </g>
    </svg>
  );
}

/* ---------- assemblies palette ---------- */

const assemblies = [
  "Assemblies A1 - Multi",
  "Assemblies A1 - Single",
  "Assemblies A3 - Multi",
  "Assemblies A3 - Single",
  "Assemblies A3-A1 - Single",
  "Purlin A3-A2 - Single",
];

const categories = [
  ["Assemblies", "border-[#1d5fae] bg-linear-to-br from-[#a9cbee] to-[#e0edf9]", (
    <g key="a">
      <path d="M2 5l10 2v27H2z" fill="#dfe4ea" /><path d="M3 7v25M6 6v27" stroke="#c3cbd4" strokeWidth="0.600" /><path d="M12 7l4 1v26h-4z" fill="#a9b4c0" />
      <path d="M10 0l24 9v4L11 5z" fill="#e6eaee" stroke="#55606c" strokeWidth="0.700" /><path d="M12 6l22 8v7L15 13z" fill="#69747f" /><path d="M15 14l19 8v4L15 18z" fill="#f6f8fa" stroke="#55606c" strokeWidth="0.500" />
      <path d="M13 8h4v8h-4zM13 19l5 2v6l-5-1z" fill="#f08a24" stroke="#a85108" strokeWidth="0.600" />
      <path d="M16 26l7 8M19 24l9 10" stroke="#f0f2f4" strokeWidth="2.500" /><path d="M18 25l8 9M15 28l5 6" stroke="#4c5763" strokeWidth="0.900" />
    </g>
  )],
  ["Views", "border-[#7a7a7a] bg-linear-to-br from-white to-[#e6e6e6]", (
    <g key="b" stroke="#777" fill="none">
      <path d="M2 12v16h8z" fill="#f4f4f4" /><path d="M5 7l6-2 1 20-4 2z" fill="#e4e4e4" /><path d="M7 7v18" />
      <path d="M13 8h5l1-2h7l1 2h5v15H13z" fill="#d5d5d5" /><path d="M24 11h6v9h-6z" fill="#eee" stroke="#999" />
      <circle cx="18" cy="17" r="7" fill="#ececec" /><circle cx="18" cy="18" r="4" fill="#c4c4c4" /><circle cx="18" cy="18" r="1.800" fill="#555" />
    </g>
  )],
  ["Beams", "border-[#7a7a7a] bg-linear-to-br from-white to-[#e6e6e6]", (
    <g key="c" stroke="#555" strokeWidth="0.700">
      <path d="M1 15L17 1h15L19 14z" fill="#f2f2f2" /><path d="M19 14L32 1v11L19 24z" fill="#b5b5b5" /><path d="M1 15l18-1v10L1 26z" fill="#5c5c5c" />
      <path d="M19 16L32 3" stroke="#e8e8e8" strokeWidth="1.200" />
      <circle cx="6" cy="20.500" r="1.700" fill="#fff" /><circle cx="13" cy="19.500" r="1.700" fill="#ddd" />
      <path d="M7 26h2v5H7z" fill="#888" /><path d="M1 31l8-2 10-3L32 14v5L18 32z" fill="#e0e0e0" />
    </g>
  )],
];

function Palette() {
  return (
    <aside className="absolute top-[99px] left-[10px] w-[497px] font-['Open_Sans',sans-serif]">
      <div className="flex h-[27px] items-center rounded-md border border-black bg-linear-to-b from-white to-[#dedede] pr-1 text-[#111]">
        <h2 className="flex-1 pt-px text-center text-[15px]">Assemblies</h2>
        <div className="flex items-center">
          <button type="button" aria-label="Region" className="mr-1">
            <svg width="16" height="12" viewBox="0 0 16 12">
              <path d="M0 0h16v12H0z" fill="#1a1f6e" /><path d="M0 0l8 6M8 0L0 6" stroke="#fff" strokeWidth="1.500" /><path d="M4 0v7M0 3h8" stroke="#fff" strokeWidth="2.500" /><path d="M4 0v7M0 3h8" stroke="#d22" strokeWidth="1.300" />
              <path d="M3 9h2M11 3h1M13 5h1M10 6h1M12 9h1" stroke="#cfd4f5" strokeWidth="1.200" />
            </svg>
          </button>
          <button type="button" aria-label="Settings">
            <svg width="16" height="16" viewBox="0 0 16 16">
              {[0, 45, 90, 135, 180, 225, 270, 315].map((a) => (
                <path key={a} d="M6.200 3l.5-2.400h2.600l.5 2.400" fill="#e4e4e4" stroke="#707070" transform={`rotate(${a} 8 8)`} />
              ))}
              <circle cx="8" cy="8" r="5.200" fill="#e4e4e4" stroke="#9a9a9a" /><circle cx="8" cy="8" r="2.500" fill="#f8f8f8" stroke="#6a6a6a" />
            </svg>
          </button>
          <button type="button" aria-label="Pin" className="ml-[7px]">
            <svg width="9" height="16" viewBox="0 0 9 16"><path d="M2 0h5v7l2 3H0l2-3z" fill="#8a8a8a" /><path d="M4.500 10v4" stroke="#777" strokeWidth="1.300" /><path d="M4 1v6" stroke="#ccc" /></svg>
          </button>
          <button type="button" aria-label="Minimize" className="ml-2">
            <svg width="14" height="8" viewBox="0 0 14 8"><rect x="0.500" y="1.500" width="13" height="4" rx="1" fill="#aaa" stroke="#7a7a7a" /></svg>
          </button>
          <button type="button" aria-label="Close" className="ml-[6px]">
            <svg width="15" height="15" viewBox="0 0 15 15"><path d="M2 2l11 11M13 2L2 13" stroke="#6e6e6e" strokeWidth="3.600" strokeLinecap="round" /><path d="M2 2l11 11M13 2L2 13" stroke="#c4c4c4" strokeWidth="2" strokeLinecap="round" /></svg>
          </button>
        </div>
      </div>

      <div className="mt-[5px] flex gap-[5px]">
        <div className="flex flex-col gap-[5px]">
          {categories.map(([label, cls, art]) => (
            <button key={label} type="button" aria-label={label} className={`flex h-[35px] w-[35px] items-center justify-center overflow-hidden rounded-[5px] border shadow-[2px_2px_3px_rgba(0,0,0,0.3)] ${cls}`}>
              <svg width="33" height="33" viewBox="0 0 34 34">{art}</svg>
            </button>
          ))}
        </div>
        <div className="relative h-[574px] flex-1 rounded-md border border-[#dcdfe6] bg-[rgba(200,203,212,0.14)] pt-[9px] pr-3 pl-[7px]">
          <ul className="flex flex-col gap-[5px]">
            {assemblies.map((a) => (
              <li key={a}>
                <button type="button" className="flex h-[35px] w-full items-center rounded-[5px] border border-[#111] bg-[#fbfbfc] px-1 pt-px text-[11px] text-[#1a1a1a]">{a}</button>
              </li>
            ))}
          </ul>
          <button type="button" aria-label="Expand" className="absolute top-[3px] right-1">
            <svg width="18" height="18" viewBox="0 0 18 18"><circle cx="9" cy="9" r="8.300" fill="#fafafa" stroke="#777" /><path d="M6.500 4.500l6 4.500-6 4.500z" fill="#ccc" stroke="#666" /></svg>
          </button>
          <svg width="12" height="12" viewBox="0 0 12 12" className="absolute right-px bottom-px" aria-hidden="true">
            <path d="M10 1h1M7 4h1M10 4h1M4 7h1M7 7h1M10 7h1M1 10h1M4 10h1M7 10h1M10 10h1" stroke="#9aa0aa" strokeWidth="1.200" />
          </svg>
        </div>
      </div>
    </aside>
  );
}

export default function App() {
  return (
    <div className="flex h-screen w-full flex-col overflow-hidden bg-[#222933] font-['Open_Sans',sans-serif]">
      <TitleBar />
      <RibbonTabs />
      <Ribbon />
      <FileTabs />
      <main className="relative min-h-0 flex-1 overflow-hidden bg-white">
        <Sheet />
        <Palette />
      </main>
    </div>
  );
}
